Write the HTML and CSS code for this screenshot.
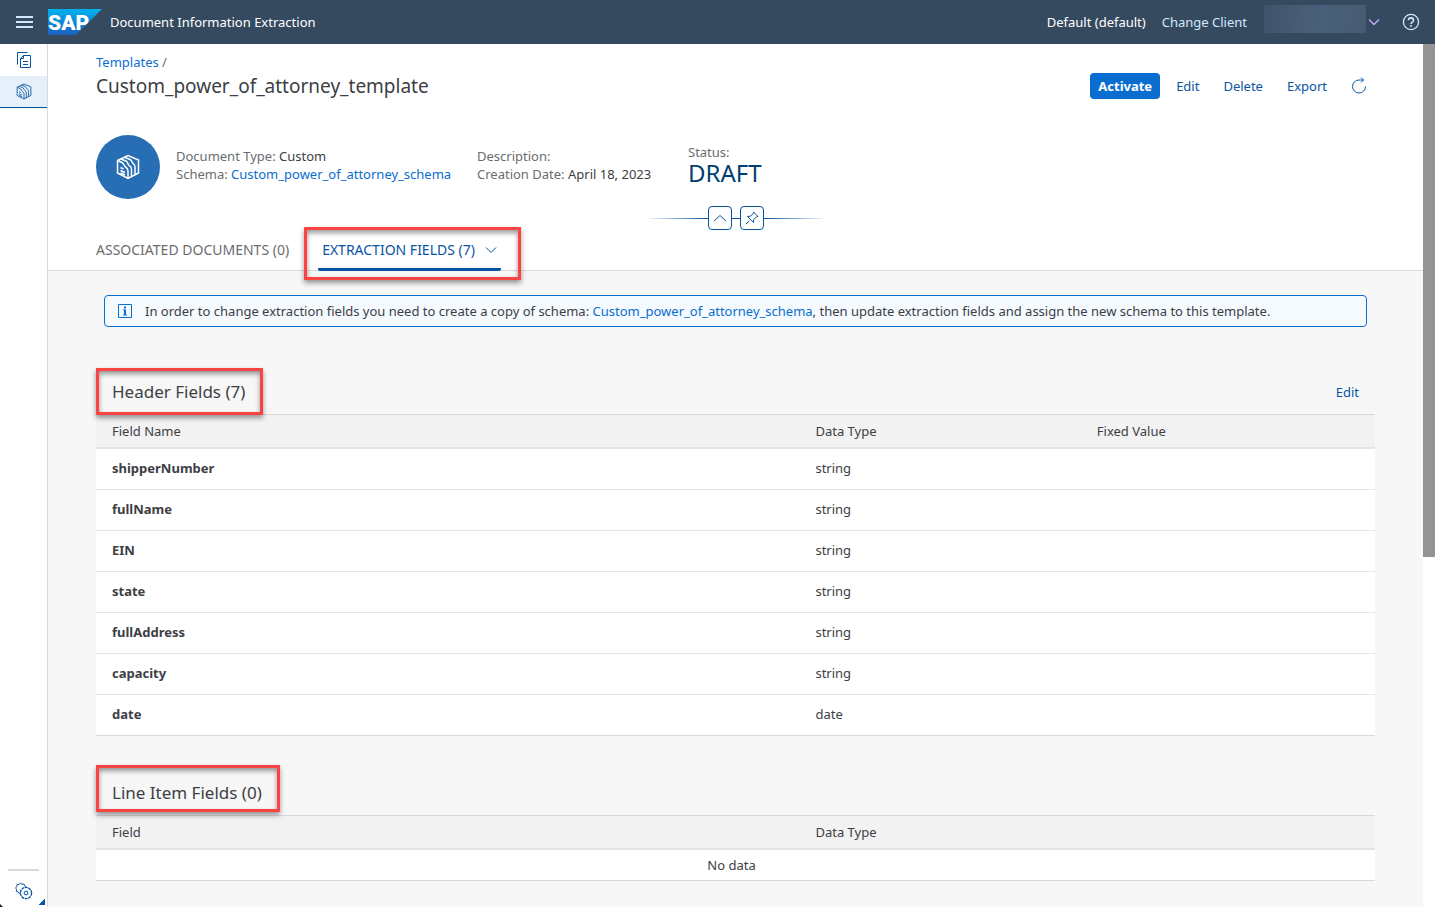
FILE: index.html
```html
<!DOCTYPE html>
<html lang="en">
<head>
<meta charset="utf-8">
<title>Document Information Extraction</title>
<meta name="viewport" content="width=device-width, initial-scale=1">
<link rel="stylesheet" href="styles.css">
</head>
<body>
<svg class="symbols" aria-hidden="true">
  <symbol id="folders" viewBox="0 0 24 26">
    <path d="M1.500 6.500V19L12 24.500 22.500 19V6L12 1.500z"/>
    <path d="M1.500 6.500 6 8.500c2 1 2 3.500 3.500 4.500 1.500.8 2.500 2 2.500 4v7.500"/>
    <path d="M5 5l5.500 2.300c1.500.8 1 3 2.500 4 1.500.8 2.500 1.700 2.500 3.700v7.500"/>
    <path d="M8.500 3.300 14 5.500c2 .8 1.500 2.500 2.700 3.700 1.500 1 2.300 1.800 2.300 3.800v7.800"/>
    <path d="M4.500 13.500l3 1.500M4.500 16.500l4.500 2M4.500 19l4.500 2"/>
  </symbol>
</svg>
<header class="shell">
  <button class="icon-btn menu" aria-label="Menu"><svg width="18" height="14" viewBox="0 0 18 14"><path d="M0 2h17M0 7h17M0 12h17" stroke="#d1e8ff" stroke-width="2"/></svg></button>
  <svg class="logo" width="54" height="26" viewBox="0 0 54 26" role="img" aria-label="SAP">
    <defs><linearGradient id="sap" x2="0" y2="1"><stop stop-color="#00b1f0"/><stop offset="1" stop-color="#1d61bd"/></linearGradient></defs>
    <path d="M0 0h54L28 26H0z" fill="url(#sap)"/>
    <text x="0" y="21" class="logo-text">SAP</text>
  </svg>
  <span class="app-name">Document Information Extraction</span>
  <span class="client">Default (default)</span>
  <button class="shell-link">Change Client</button>
  <button class="user" aria-label="User menu"><span class="user-name"></span><svg width="12" height="8" viewBox="0 0 12 8"><path d="m1 1.500 5 5 5-5" fill="none" stroke="#c4adff" stroke-width="1.300"/></svg></button>
  <button class="icon-btn help" aria-label="Help"><svg width="18" height="18" viewBox="0 0 18 18" fill="none" stroke="#d1e8ff" stroke-width="1.300"><circle cx="9" cy="9" r="7.600"/><path d="M6.500 7.300c0-3.200 5-3.200 5 0 0 1.800-2.500 1.700-2.500 3.700M9 12v1.700" stroke-width="1.600"/></svg></button>
</header>
<div class="body">
  <nav class="side" aria-label="Main">
    <a href="#" class="side-item" aria-label="Documents"><svg width="16" height="18" viewBox="0 0 16 18" class="line"><path d="M1.500 13.500v-12h10M7.500 4.500h7v12h-10v-9zM7.500 4.500v3h-3M7 10.500h5M7 13.500h5"/></svg></a>
    <a href="#" class="side-item current" aria-label="Templates"><svg width="16" height="17" class="line thick"><use href="#folders"/></svg></a>
    <a href="#" class="side-item settings" aria-label="Settings"><svg width="18" height="18" viewBox="0 0 18 18" class="line"><path d="M5.500 10.800 4 11.500l-1-1.700-1.700-.5.300-2L.6 6l1.200-1.500.2-2 2-.2L5.500 1.200l1.500 1 2-.1.700 1.800 1.600 1"/><circle cx="11" cy="11" r="5.600" stroke-dasharray="2.900 .6" stroke-width="1.300"/><circle cx="11" cy="11" r="1.900"/></svg></a>
  </nav>
  <main class="page">
    <section class="object-header">
      <nav class="crumbs" aria-label="Breadcrumb"><a href="#">Templates</a> /</nav>
      <div class="title-row">
        <h1>Custom_power_of_attorney_template</h1>
        <div class="actions">
          <button class="btn primary">Activate</button>
          <button class="btn">Edit</button>
          <button class="btn">Delete</button>
          <button class="btn">Export</button>
          <button class="btn" aria-label="Refresh"><svg width="16" height="18" viewBox="0 0 16 18" class="line"><path d="M14.500 9.500A6.500 6.500 0 1 1 8 3h4.500M10 .500 12.500 3 10 5.500"/></svg></button>
        </div>
      </div>
      <div class="facts">
        <div class="avatar"><svg width="24" height="26"><use href="#folders"/></svg></div>
        <div class="fact schema">
          <div><span class="label">Document Type:</span> Custom</div>
          <div><span class="label">Schema:</span> <a href="#">Custom_power_of_attorney_schema</a></div>
        </div>
        <div class="fact created">
          <div class="label">Description:</div>
          <div><span class="label">Creation Date:</span> April 18, 2023</div>
        </div>
        <div class="status">
          <div class="label">Status:</div>
          <div class="status-value">DRAFT</div>
        </div>
      </div>
      <div class="expander">
        <span class="rule left"></span>
        <button aria-label="Collapse header"><svg width="14" height="8" viewBox="0 0 14 8" class="line"><path d="m1 7 6-5.500L13 7"/></svg></button>
        <span class="rule mid"></span>
        <button aria-label="Pin header"><svg width="14" height="14" viewBox="0 0 14 14" class="line"><path d="M8.500 1 13 5.500l-1.500.3-2.700 2.700-.3 3L6 9 2.500 5.500l3-.3 2.700-2.700zM4.300 9.700.8 13.200"/></svg></button>
        <span class="rule right"></span>
      </div>
      <div class="tabs" role="tablist">
        <button class="tab" role="tab" aria-selected="false">ASSOCIATED DOCUMENTS (0)</button>
        <button class="tab selected marked" role="tab" aria-selected="true">EXTRACTION FIELDS (7)<svg width="12" height="8" viewBox="0 0 12 8" class="line"><path d="m1 1.500 5 5 5-5"/></svg></button>
      </div>
    </section>
    <div class="content">
      <div class="strip">
        <svg width="16" height="16" viewBox="0 0 16 16"><path d="M1.500 1.500h13v13h-13z" fill="none" stroke="#0a6ed1"/><path d="M7 3.500h2v2H7zM6 6.500h3v5h1v1H6v-1h1v-4H6z" fill="#0a6ed1"/></svg>
        <p>In order to change extraction fields you need to create a copy of schema: <a href="#">Custom_power_of_attorney_schema</a>, then update extraction fields and assign the new schema to this template.</p>
      </div>
      <section class="block">
        <div class="toolbar"><h2 class="marked">Header Fields (7)</h2><button class="btn">Edit</button></div>
        <table>
          <thead><tr><th class="c-name">Field Name</th><th class="c-type">Data Type</th><th>Fixed Value</th></tr></thead>
          <tbody>
            <tr><td>shipperNumber</td><td>string</td><td></td></tr>
            <tr><td>fullName</td><td>string</td><td></td></tr>
            <tr><td>EIN</td><td>string</td><td></td></tr>
            <tr><td>state</td><td>string</td><td></td></tr>
            <tr><td>fullAddress</td><td>string</td><td></td></tr>
            <tr><td>capacity</td><td>string</td><td></td></tr>
            <tr><td>date</td><td>date</td><td></td></tr>
          </tbody>
        </table>
      </section>
      <section class="block items">
        <div class="toolbar"><h2 class="marked">Line Item Fields (0)</h2></div>
        <table>
          <thead><tr><th class="c-name">Field</th><th>Data Type</th></tr></thead>
          <tbody><tr><td colspan="2" class="empty">No data</td></tr></tbody>
        </table>
      </section>
    </div>
  </main>
  <div class="scroll-track"><div class="scroll-thumb"></div></div>
</div>
</body>
</html>
```
FILE: styles.css
```css
* { box-sizing: border-box; }
body {
  margin: 0;
  height: 100vh;
  display: flex;
  flex-direction: column;
  overflow: hidden;
  font: 13px/18px "Noto Sans", "Open Sans", sans-serif;
  color: #3c4045;
  background: #fff;
}
h1, h2, p { margin: 0; font-weight: 400; }
a { color: #0a6ed1; text-decoration: none; }
button { font: inherit; color: inherit; background: none; border: 0; padding: 0; cursor: pointer; }
svg { display: block; flex: none; }
.symbols { position: absolute; width: 0; height: 0; }
.line { fill: none; stroke: #0854a0; stroke-width: 1; }
.thick { stroke-width: 1.3; }

.shell {
  flex: none;
  height: 44px;
  display: flex;
  align-items: center;
  padding: 0 15px 0 16px;
  background: #354a5f;
  color: #fff;
}
.menu { width: 32px; }
.logo-text { font: 900 21px Roboto, sans-serif; fill: #fff; }
.app-name { margin-left: 8px; }
.client { margin-left: auto; }
.shell-link { margin-left: 16px; color: #d1e8ff; }
.user { display: flex; align-items: center; gap: 2px; margin-left: 17px; }
.user-name { width: 102px; height: 28px; margin-bottom: 6px; background: linear-gradient(100deg, #40536a, #4a607a 55%, #465b73); }
.help { margin-left: 22px; }

.body { flex: 1; min-height: 0; display: flex; }
.side {
  flex: none;
  width: 48px;
  display: flex;
  flex-direction: column;
  border-right: 1px solid #d9d9d9;
  background:
    linear-gradient(135deg, transparent 50%, #0854a0 50%) right 2px bottom 2px / 6px 6px no-repeat,
    radial-gradient(circle at 100% 0, transparent 6px, #1a1a2e 7px) left bottom / 6px 6px no-repeat,
    #fff;
}
.side-item { height: 32px; display: flex; align-items: center; justify-content: center; }
.current { background: #e5f0fa; border-bottom: 1px solid #0854a0; }
.settings { height: 38px; margin: auto 8px 0; padding-top: 4px; border-top: 2px solid #d9d9d9; }

.page { flex: 1; min-width: 0; overflow: hidden; background: #f7f7f7; }
.object-header { padding: 9px 48px 0; background: #fff; border-bottom: 1px solid #d9d9d9; }
.crumbs, .label { color: #6a6d70; }
.title-row { display: flex; align-items: center; justify-content: space-between; margin-top: 2px; }
h1 { font-size: 19px; line-height: 26px; }
.actions { display: flex; gap: 8px; }
.btn { height: 26px; padding: 0 8px; color: #0854a0; }
.primary { background: #0a6ed1; color: #fff; font-weight: 700; border-radius: 4px; }
.facts { display: flex; margin-top: 36px; }
.avatar {
  width: 64px; height: 64px;
  display: flex; align-items: center; justify-content: center;
  border-radius: 50%;
  background: #286eb4;
}
.avatar svg { fill: none; stroke: #fff; stroke-width: 1.5; }
.fact { padding-top: 12px; white-space: nowrap; }
.schema { width: 285px; margin-left: 16px; }
.created { width: 180px; margin-left: 16px; }
.status { padding-top: 8px; margin-left: 31px; }
.status-value { font-size: 24px; line-height: 24px; color: #003f72; }
.expander { display: flex; align-items: center; justify-content: center; margin-top: 7px; }
.expander button {
  width: 24px; height: 24px;
  display: flex; align-items: center; justify-content: center;
  border: 1px solid #0854a0;
  border-radius: 4px;
}
.rule { height: 1px; background: #0854a0; }
.left { width: 64px; background: linear-gradient(to left, #0854a0, transparent); }
.mid { width: 8px; }
.right { width: 64px; background: linear-gradient(to right, #0854a0, transparent); }
.tabs { display: flex; gap: 29px; font-size: 14px; }
.tab { height: 40px; color: #6a6d70; }
.selected {
  display: flex; align-items: center; gap: 10px;
  height: 41px;
  margin-bottom: -1px;
  padding: 2px 4px 0;
  border-bottom: 3px solid #0854a0;
  border-radius: 2px;
  color: #0854a0;
}

.marked { position: relative; }
.marked::after {
  content: "";
  position: absolute;
  inset: -3px -20px -12px -14px;
  border: 3px solid #fa4343;
  box-shadow: 0 3px 5px #0006, inset 0 3px 5px #0006;
  pointer-events: none;
}
.toolbar .marked::after { inset: -2px -2px -1px 0; }
.items .toolbar .marked::after { inset: -6px -2px 3px 0; }

.content { padding: 24px 48px; }
.strip {
  min-height: 32px;
  display: flex;
  align-items: center;
  gap: 12px;
  margin: 0 8px;
  padding: 6px 12px;
  border: 1px solid #0a6ed1;
  border-radius: 4px;
  background: #f5faff;
}
.block { margin-top: 35px; }
.strip + .block { margin-top: 43px; }
.toolbar { display: flex; align-items: center; justify-content: space-between; height: 44px; padding-right: 8px; }
h2 { padding: 0 16px; font-size: 17px; line-height: 44px; }
table { width: 100%; table-layout: fixed; border-collapse: separate; border-spacing: 0; background: #fff; }
th, td { text-align: left; font-weight: 400; padding: 0 16px; }
th { height: 35px; background: #f2f2f2; border-top: 1px solid #d9d9d9; border-bottom: 2px solid #e4e4e4; }
td { height: 41px; padding-bottom: 2px; border-bottom: 1px solid #e5e5e5; }
tr:last-child td { border-bottom-color: #d9d9d9; }
td:first-child { font-weight: 700; }
.c-name { width: 55%; }
.c-type { width: 22%; }
td.empty { height: 31px; padding: 0 8px 0 0; text-align: center; font-weight: 400; }

.scroll-track { flex: none; width: 12px; background: #fff; }
.scroll-thumb { height: 59.500%; background: #949494; }
```
